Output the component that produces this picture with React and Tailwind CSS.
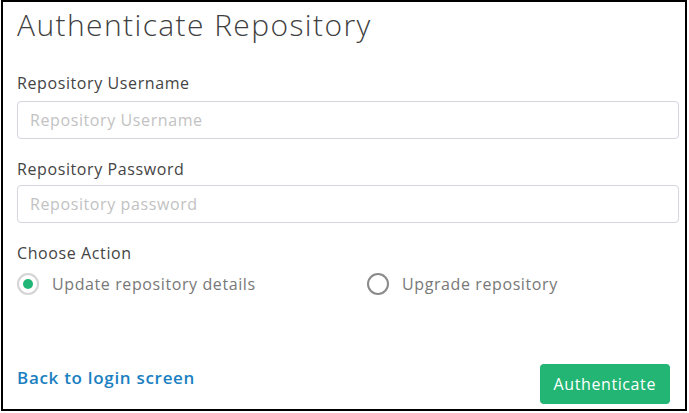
import { useState } from 'react'

const font = { fontFamily: '"Open Sans", "Liberation Sans", sans-serif' }

const Radio = ({ checked, label, onClick }) => (
  <button type="button" onClick={onClick} className="flex items-center gap-[13px] text-left">
    <span className={`w-[22px] h-[22px] rounded-full border-2 flex items-center justify-center ${checked ? 'border-[#d4d4d4]' : 'border-[#8a8a8a]'}`}>
      {checked && <span className="w-[10px] h-[10px] rounded-full bg-[#22b573]" />}
    </span>
    <span className="text-[16px] leading-[20px] tracking-[0.6px] text-[#787878]">{label}</span>
  </button>
)

export default function App() {
  const [action, setAction] = useState('update')

  return (
    <div className="w-[689px] h-[413px] bg-white" style={font}>
      <div className="ml-[1px] w-[686px] h-[411px] border-2 border-black bg-white flex flex-col px-[14px]">
        <h1 className="mt-[5px] text-[30px] leading-[36px] font-light text-[#3f3f3f] tracking-[1.4px]">
          Authenticate Repository
        </h1>

        {/* Username */}
        <label className="mt-[30px] text-[16px] leading-[20px] tracking-[0.6px] text-[#444]">Repository Username</label>
        <input
          placeholder="Repository Username"
          className="mt-[8px] h-[38px] w-[662px] rounded-[4px] border border-[#d3d5db] px-[12px] text-[16px] tracking-[0.6px] text-[#444] placeholder:text-[#c2c2c2] outline-none"
        />

        {/* Password */}
        <label className="mt-[20px] text-[16px] leading-[20px] tracking-[0.6px] text-[#444]">Repository Password</label>
        <input
          type="password"
          placeholder="Repository password"
          className="mt-[6px] h-[38px] w-[662px] rounded-[4px] border border-[#d3d5db] px-[12px] text-[16px] tracking-[0.6px] text-[#444] placeholder:text-[#c2c2c2] outline-none"
        />

        {/* Action */}
        <span className="mt-[20px] text-[16px] leading-[20px] tracking-[0.6px] text-[#444]">Choose Action</span>
        <div className="mt-[10px] flex">
          <div className="w-[350px]">
            <Radio checked={action === 'update'} label="Update repository details" onClick={() => setAction('update')} />
          </div>
          <Radio checked={action === 'upgrade'} label="Upgrade repository" onClick={() => setAction('upgrade')} />
        </div>

        <div className="mt-auto mb-[5px] flex items-center justify-between">
          <a href="#" className="text-[17px] leading-[20px] font-semibold tracking-[0.7px] text-[#1a7fc1] mb-[12px]">
            Back to login screen
          </a>
          <button className="mr-[1px] h-[40px] px-[14px] rounded-[4px] bg-[#22b573] text-white text-[16px] tracking-[0.6px] font-medium">
            Authenticate
          </button>
        </div>
      </div>
    </div>
  )
}
